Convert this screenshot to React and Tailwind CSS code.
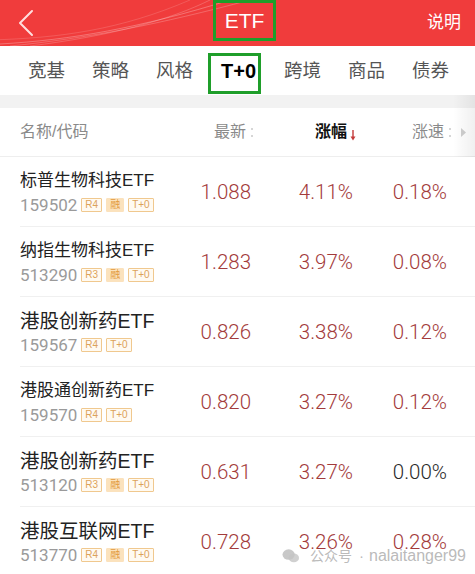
import React from 'react';

const FONT = { fontFamily: '"Liberation Sans", "Noto Sans CJK SC", sans-serif' };
const NUM = { fontFamily: 'Roboto, "Liberation Sans", sans-serif' };

const tabs = ['宽基', '策略', '风格', 'T+0', '跨境', '商品', '债券'];

const rows = [
  { name: '标普生物科技ETF', code: '159502', risk: 'R4', rong: true, price: '1.088', chg: '4.11%', speed: '0.18%', small: true },
  { name: '纳指生物科技ETF', code: '513290', risk: 'R3', rong: true, price: '1.283', chg: '3.97%', speed: '0.08%', small: true },
  { name: '港股创新药ETF', code: '159567', risk: 'R4', rong: false, price: '0.826', chg: '3.38%', speed: '0.12%' },
  { name: '港股通创新药ETF', code: '159570', risk: 'R4', rong: false, price: '0.820', chg: '3.27%', speed: '0.12%', small: true },
  { name: '港股创新药ETF', code: '513120', risk: 'R3', rong: true, price: '0.631', chg: '3.27%', speed: '0.00%', flat: true },
  { name: '港股互联网ETF', code: '513770', risk: 'R4', rong: true, price: '0.728', chg: '3.26%', speed: '0.28%' },
];

const Dots = () => (
  <span className="inline-flex flex-col gap-[5px] ml-[5px]">
    <span className="w-[2px] h-[2px] rounded-full bg-[#c8c8c8]" />
    <span className="w-[2px] h-[2px] rounded-full bg-[#c8c8c8]" />
  </span>
);

const Badge = ({ children, filled }) => (
  <span
    className={`flex items-center justify-center h-[14px] px-[3px] text-[10px] leading-none border rounded-[1px] ${
      filled ? 'bg-[#fbe2bd] border-[#fbe2bd] text-[#e39a3c]' : 'bg-[#fffaf1] border-[#f0c88e] text-[#dca25a]'
    }`}
  >
    {children}
  </span>
);

export default function App() {
  return (
    <div className="relative w-[475px] h-[574px] overflow-hidden bg-white" style={FONT}>
      {/* top bar */}
      <header className="relative h-[46px] bg-[#f03c3c] flex items-center justify-between px-[18px] overflow-hidden">
        <svg className="absolute left-0 top-0" width="300" height="46" viewBox="0 0 300 46" fill="none">
          <path d="M0 44 C70 40 140 28 230 0" stroke="white" strokeOpacity="0.28" strokeWidth="1" />
          <path d="M10 46 C90 38 160 24 250 0" stroke="white" strokeOpacity="0.22" strokeWidth="1" />
          <path d="M30 46 C110 36 170 20 210 0" stroke="white" strokeOpacity="0.2" strokeWidth="1" />
          <path d="M-10 40 C60 38 120 30 190 0" stroke="white" strokeOpacity="0.15" strokeWidth="1" />
        </svg>
        <svg className="relative" width="16" height="28" viewBox="0 0 16 28" fill="none">
          <path d="M14 2 L2 14 L14 26" stroke="#ffdede" strokeWidth="2" strokeLinecap="round" strokeLinejoin="round" />
        </svg>
        <div className="absolute left-[213px] top-0 w-[63px] h-[41px] border-[3px] border-[#1f9e2a] flex items-center justify-center">
          <span className="text-white text-[21px] leading-none">ETF</span>
        </div>
        <span className="relative text-white text-[17px] mr-[-4px]">说明</span>
      </header>

      {/* category tabs */}
      <nav className="h-[49px] flex items-center pl-[28px] gap-[27px]">
        {tabs.map((t) =>
          t === 'T+0' ? (
            <span key={t} className="relative w-[37px] h-full flex items-center justify-center text-[20px] font-bold text-black">
              {t}
              <span className="absolute left-[-12px] top-[7px] w-[53px] h-[41px] border-[3px] border-[#1f9e2a]" />
            </span>
          ) : (
            <span key={t} className="w-[37px] text-[18.5px] text-[#555] whitespace-nowrap">
              {t}
            </span>
          )
        )}
      </nav>

      <div className="h-[13px] bg-[#f2f2f2]" />

      {/* column header */}
      <div className="relative h-[49px] flex items-center border-b border-[#eeeeee] text-[16px] text-[#8a8a8a]">
        <span className="w-[180px] pl-[20px]">名称/代码</span>
        <span className="w-[75px] flex items-center justify-end pr-[2px]">
          最新<Dots />
        </span>
        <span className="w-[101px] flex items-center justify-end">
          <span className="font-bold text-[#111]">涨幅</span>
          <svg className="ml-[3px] mt-[6px]" width="6" height="11" viewBox="0 0 6 11">
            <path d="M3 0 V9" stroke="#c43a3a" strokeWidth="1.4" />
            <path d="M0.5 6.5 L3 10.5 L5.5 6.5 Z" fill="#c43a3a" />
          </svg>
        </span>
        <span className="w-[95px] flex items-center justify-end">
          涨速<Dots />
        </span>
        <svg className="ml-[10px]" width="6" height="9" viewBox="0 0 6 9">
          <path d="M0 0 L5 4.5 L0 9 Z" fill="#cfcfcf" />
        </svg>
        <div className="absolute right-0 top-[-13px] h-[62px] w-[22px] bg-gradient-to-r from-transparent to-black/[0.06]" />
      </div>

      {/* list */}
      {rows.map((r, i) => (
        <div key={i} className="relative h-[70px] flex items-center">
          <div className="w-[180px] pl-[20px] flex flex-col">
            <span className={`${r.small ? 'text-[17px]' : 'text-[19.5px]'} text-[#222] leading-[24px] whitespace-nowrap`}>
              {r.name}
            </span>
            <div className="flex items-center gap-[4px] mt-[2px]">
              <span className="text-[17px] text-[#9a9a9a] leading-[20px]" style={NUM}>{r.code}</span>
              <Badge>{r.risk}</Badge>
              {r.rong && <Badge filled>融</Badge>}
              <Badge>T+0</Badge>
            </div>
          </div>
          <span className="w-[71px] text-right text-[20.5px] font-light text-[#a33b3b]" style={NUM}>{r.price}</span>
          <span className="w-[102px] text-right text-[20.5px] font-light text-[#a33b3b]" style={NUM}>{r.chg}</span>
          <span
            className={`w-[94px] text-right text-[20.5px] font-light ${r.flat ? 'text-[#2a2a2a]' : 'text-[#a33b3b]'}`}
            style={NUM}
          >
            {r.speed}
          </span>
          <div className="absolute left-[20px] right-0 bottom-0 h-px bg-[#f0f0f0]" />
        </div>
      ))}

      {/* watermark */}
      <div className="absolute left-[282px] top-[544px] flex items-center text-[#a8a8a8]/80 whitespace-nowrap">
        <svg width="18" height="16" viewBox="0 0 19 16">
          <ellipse cx="7" cy="6.5" rx="6.5" ry="5.5" fill="#b0b0b0" fillOpacity="0.7" />
          <ellipse cx="12.5" cy="10" rx="5.5" ry="4.6" fill="#c4c4c4" fillOpacity="0.8" />
        </svg>
        <span className="ml-[10px] text-[14px]">公众号</span>
        <span className="ml-[7px] text-[15px]">·</span>
        <span className="ml-[5px] text-[16px]">nalaitanger99</span>
      </div>
    </div>
  );
}
